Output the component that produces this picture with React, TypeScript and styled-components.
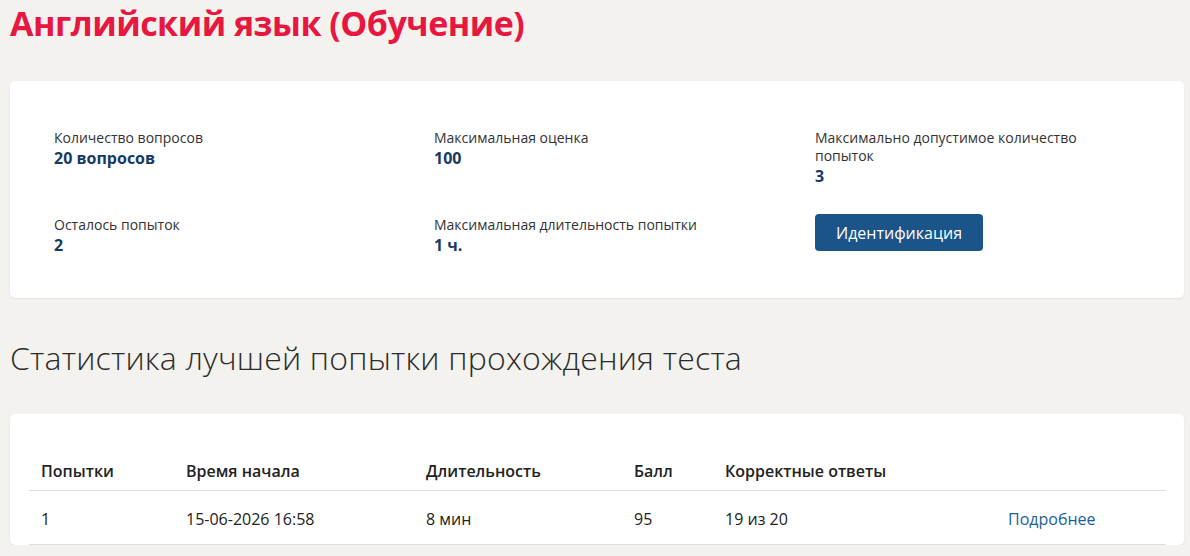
import styled, { createGlobalStyle } from "styled-components";

const GlobalStyle = createGlobalStyle`
body {
    margin: 0;
    background: #f3f2ef;
    font-family: "Open Sans", "Noto Sans", sans-serif;
    color: #222;
}
`;

const Page = styled.div`
padding: 0 6px 0 10px;
`;

const Title = styled.h1`
margin: 0;
padding-top: 3px;
height: 78px;
font-size: 34px;
line-height: 40px;
font-weight: 700;
letter-spacing: -0.5px;
color: #e8173f;
`;

const Card = styled.div`
background: #fff;
border-radius: 5px;
box-shadow: 0 1px 2px rgba(0, 0, 0, 0.08);
`;

const InfoGrid = styled.div`
display: grid;
grid-template-columns: 380px 381px 1fr;
grid-auto-rows: 67px;
row-gap: 20px;
padding: 48px 44px 15px;
`;

const Field = styled.div`
display: flex;
flex-direction: column;
`;

const Label = styled.span`
font-size: 14px;
line-height: 18px;
color: #333;
max-width: 290px;
`;

const Value = styled.span`
font-size: 16px;
line-height: 22px;
font-weight: 700;
color: #173a63;
`;

const Button = styled.button`
align-self: flex-start;
margin-top: -2px;
width: 168px;
height: 37px;
border: none;
border-radius: 4px;
background: #1a5489;
color: #fff;
font-family: inherit;
font-size: 16px;
cursor: pointer;
`;

const Heading = styled.h2`
margin: 0;
padding-top: 40px;
height: 76px;
font-size: 32px;
line-height: 40px;
font-weight: 300;
letter-spacing: 0.2px;
color: #2b2b2b;
`;

const TableCard = styled(Card)`
padding: 40px 18px 0 19px;
`;

const Table = styled.table`
width: 100%;
table-layout: fixed;
border-collapse: collapse;
font-size: 16px;
`;

const Th = styled.th<{ $w?: number }>`
box-sizing: border-box;
text-align: left;
font-weight: 600;
padding: 6px 12px 8px;
width: ${(p) => (p.$w ? `${p.$w}px` : "auto")};
border-bottom: 1px solid #dedede;
color: #222;
`;

const Td = styled.td`
padding: 17px 12px 14px;
border-bottom: 1px solid #dedede;
color: #222;
`;

const More = styled.a`
color: #1d5d97;
text-decoration: none;
cursor: pointer;
`;

const fields = [
    { label: "Количество вопросов", value: "20 вопросов" },
    { label: "Максимальная оценка", value: "100" },
    { label: "Максимально допустимое количество попыток", value: "3" },
    { label: "Осталось попыток", value: "2" },
    { label: "Максимальная длительность попытки", value: "1 ч." },
];

const attempts = [
    { n: 1, start: "15-06-2026 16:58", dur: "8 мин", score: 95, correct: "19 из 20" },
];

export default function App() {
    return (
        <>
            <GlobalStyle />
            <Page>
                <Title>Английский язык (Обучение)</Title>
                <Card>
                    <InfoGrid>
                        {fields.map((f) => (
                            <Field key={f.label}>
                                <Label>{f.label}</Label>
                                <Value>{f.value}</Value>
                            </Field>
                        ))}
                        <Field>
                            <Button>Идентификация</Button>
                        </Field>
                    </InfoGrid>
                </Card>
                <Heading>Статистика лучшей попытки прохождения теста</Heading>
                <TableCard>
                    <Table>
                        <thead>
                            <tr>
                                <Th $w={145}>Попытки</Th>
                                <Th $w={240}>Время начала</Th>
                                <Th $w={208}>Длительность</Th>
                                <Th $w={91}>Балл</Th>
                                <Th $w={283}>Корректные ответы</Th>
                                <Th />
                            </tr>
                        </thead>
                        <tbody>
                            {attempts.map((a) => (
                                <tr key={a.n}>
                                    <Td>{a.n}</Td>
                                    <Td>{a.start}</Td>
                                    <Td>{a.dur}</Td>
                                    <Td>{a.score}</Td>
                                    <Td>{a.correct}</Td>
                                    <Td><More>Подробнее</More></Td>
                                </tr>
                            ))}
                        </tbody>
                    </Table>
                </TableCard>
            </Page>
        </>
    );
}
